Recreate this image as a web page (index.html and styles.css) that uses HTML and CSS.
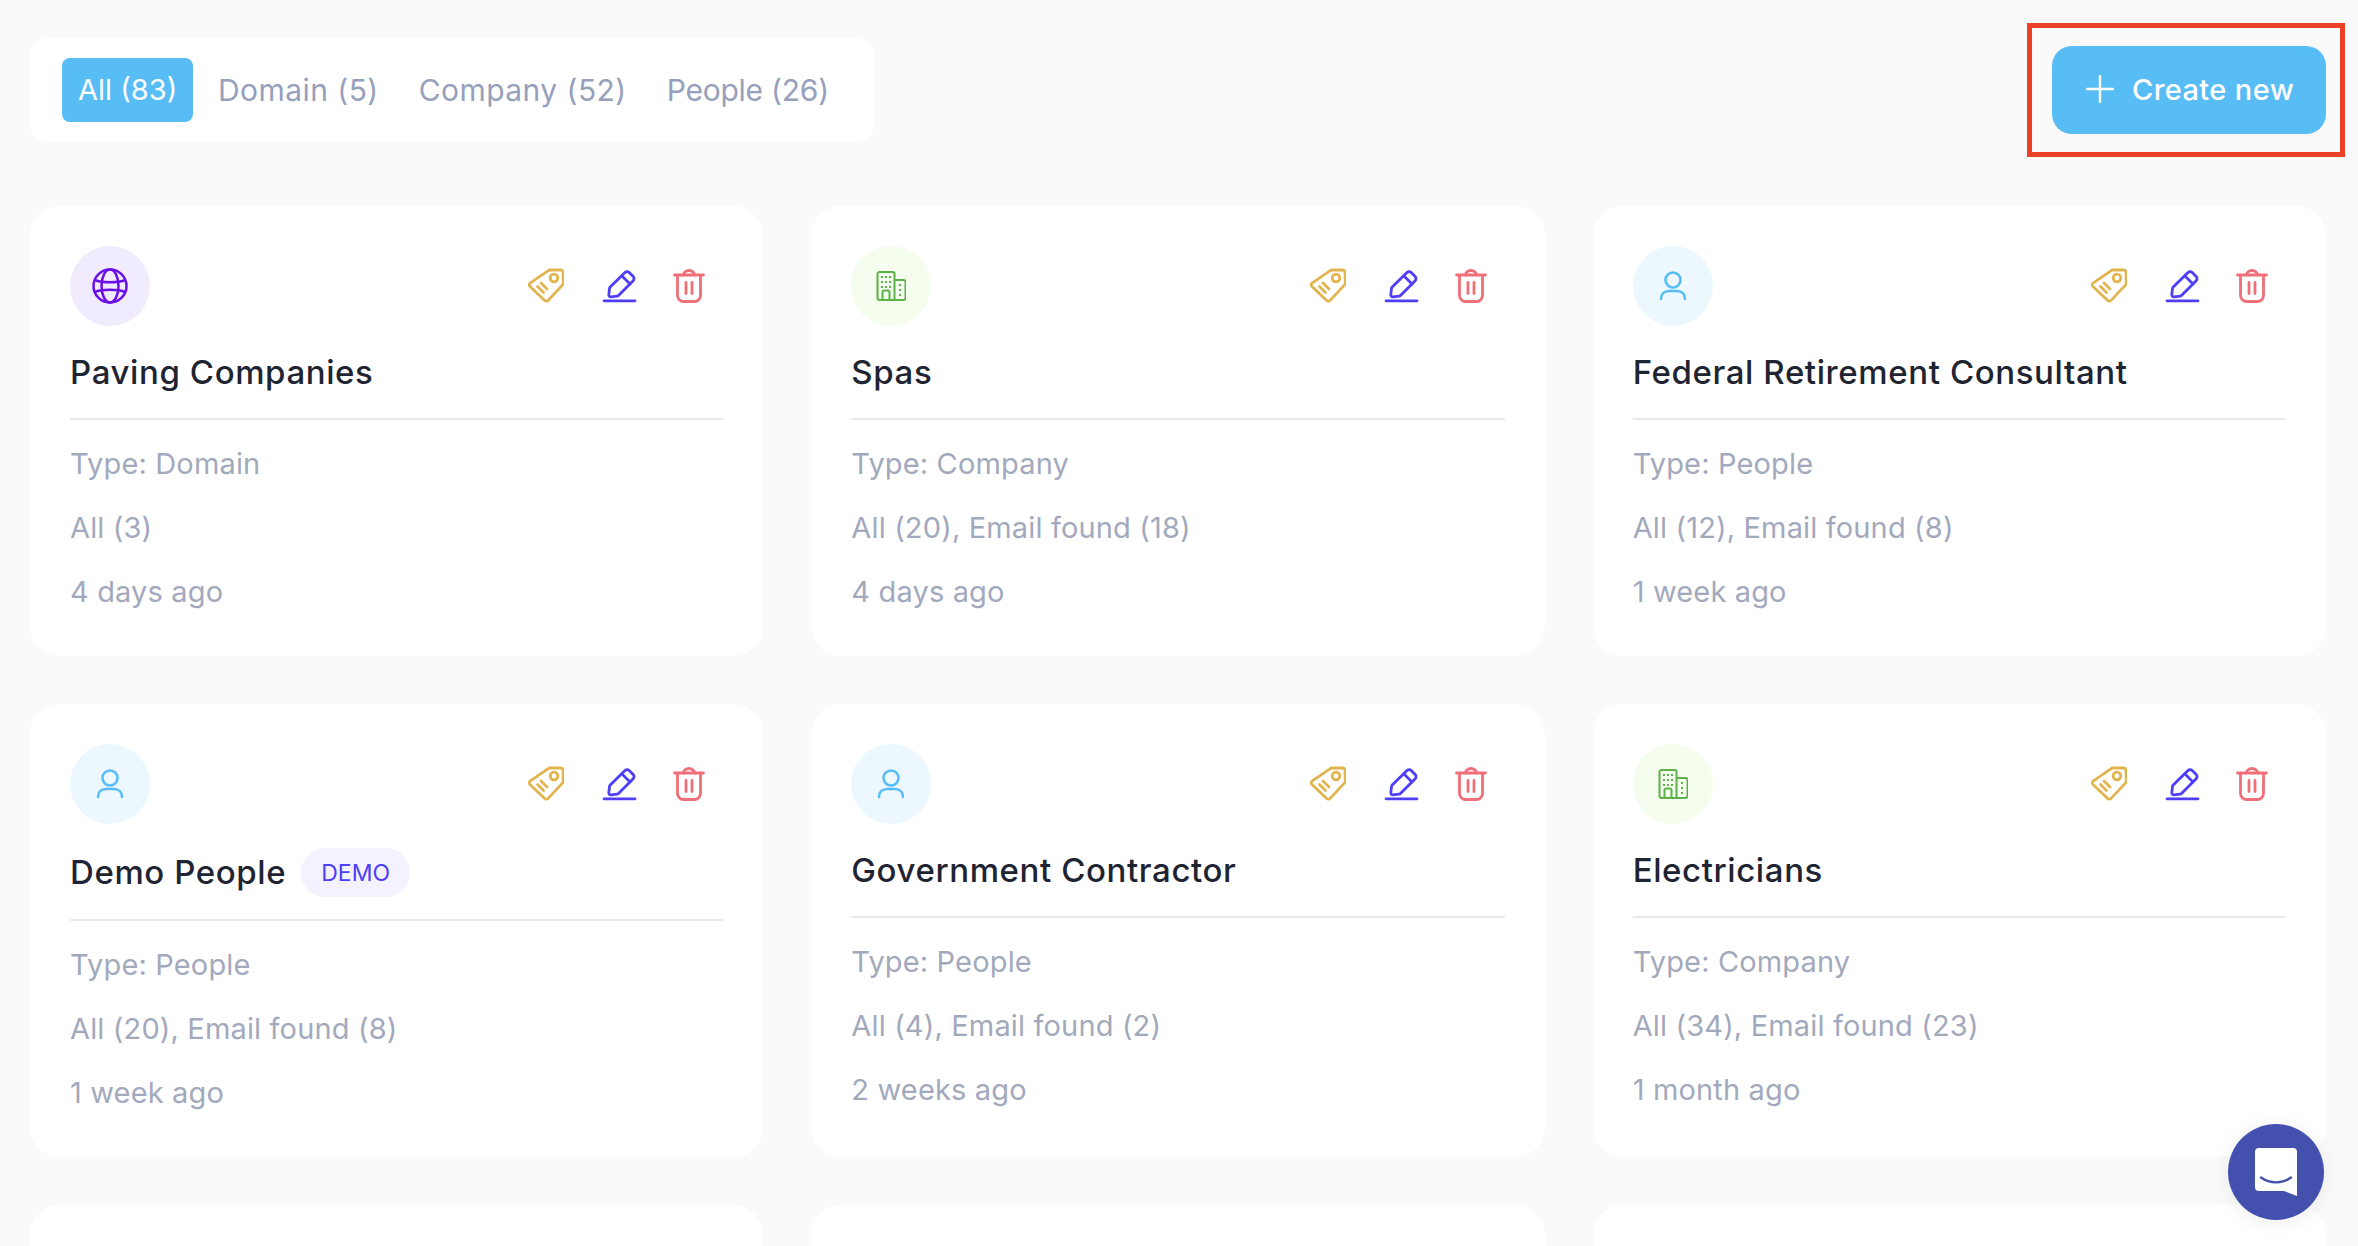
FILE: index.html
```html
<!DOCTYPE html>
<html lang="en">
<head>
<meta charset="utf-8">
<title>Lists</title>
<link rel="stylesheet" href="styles.css">
</head>
<body>
<svg class="defs" width="0" height="0" aria-hidden="true">
  <symbol id="i-tag" viewBox="0 0 36 36"><g fill="none" stroke="currentColor" stroke-width="2.8" stroke-linecap="round" stroke-linejoin="round"><path d="M22 2h10.5a2.500 2.500 0 0 1 2.500 2.500l.3 10.500a3 3 0 0 1-.9 2.100L20.100 32.400a2.400 2.400 0 0 1-3.400 0L2 18.600a2.400 2.400 0 0 1 0-3.400L19.900 2.900A3 3 0 0 1 22 2z"/><circle cx="26" cy="10" r="3.800"/><path d="M13 15l6 6M9.500 18.500l6 6"/></g></symbol>
  <symbol id="i-pen" viewBox="0 0 36 36"><g fill="none" stroke="currentColor" stroke-width="2.800" stroke-linecap="round" stroke-linejoin="round"><path d="M24 4.500a3 3 0 0 1 4.200 0l4 4a3 3 0 0 1 0 4.200L17.500 27.400a2.500 2.500 0 0 1-1.500.700l-6 .700a2 2 0 0 1-2.200-2.200l.7-6a2.500 2.500 0 0 1 .7-1.500z"/><path d="M21 8l8 8"/><path d="M3 32.800h31"/></g></symbol>
  <symbol id="i-trash" viewBox="0 0 36 36"><g fill="none" stroke="currentColor" stroke-width="2.800" stroke-linecap="round" stroke-linejoin="round"><path d="M3.500 7h29"/><path d="M12.500 7a5.500 4.500 0 0 1 11 0"/><path d="M6.500 7.500v20a6 6 0 0 0 6 6h11a6 6 0 0 0 6-6v-20"/><path d="M15 14.500v11M21 14.500v11"/></g></symbol>
  <symbol id="i-globe" viewBox="0 0 36 36"><g fill="none" stroke="currentColor" stroke-width="2.500"><circle cx="18" cy="18" r="16.500"/><ellipse cx="18" cy="18" rx="8.500" ry="16.500"/><path d="M2.500 12c8 3 23 3 31 0M2.500 24c8-3 23-3 31 0"/></g></symbol>
  <symbol id="i-building" viewBox="0 0 30 30"><g fill="none" stroke="currentColor" stroke-width="2" stroke-linejoin="round"><path d="M1.500 3a2 2 0 0 1 2-2h13a2 2 0 0 1 2 2v26h-15a2 2 0 0 1-2-2z"/><path d="M18.500 9h9a2 2 0 0 1 2 2v16a2 2 0 0 1-2 2h-9"/><path d="M6.500 29v-8a1.500 1.500 0 0 1 1.500-1.500h4a1.500 1.500 0 0 1 1.500 1.500v8"/></g><g fill="currentColor"><rect x="5" y="5" width="2" height="2"/><rect x="9" y="5" width="2" height="2"/><rect x="13" y="5" width="2" height="2"/><rect x="5" y="10" width="2" height="2"/><rect x="9" y="10" width="2" height="2"/><rect x="13" y="10" width="2" height="2"/><rect x="5" y="15" width="2" height="2"/><rect x="9" y="15" width="2" height="2"/><rect x="13" y="15" width="2" height="2"/><rect x="23" y="13" width="2" height="2"/><rect x="23" y="18" width="2" height="2"/><rect x="23" y="23" width="2" height="2"/></g></symbol>
  <symbol id="i-user" viewBox="0 0 28 30"><g fill="none" stroke="currentColor" stroke-width="2.600" stroke-linecap="round"><circle cx="14" cy="9" r="7.500"/><path d="M2 28c0-5 3-8 8-8h8c5 0 8 3 8 8"/></g></symbol>
</svg>

<header class="top">
  <nav class="tabs">
    <span class="tab tab-active">All (83)</span>
    <span class="tab">Domain (5)</span>
    <span class="tab">Company (52)</span>
    <span class="tab tab-people">People (26)</span>
  </nav>
  <div class="create-wrap">
    <button class="create" type="button">
      <svg class="plus" viewBox="0 0 28 28"><path d="M14 1v26M1 14h26" fill="none" stroke="currentColor" stroke-width="2.400" stroke-linecap="round"/></svg>
      <span>Create new</span>
    </button>
    <span class="highlight"></span>
  </div>
</header>

<main class="grid">
  <article class="card">
    <div class="card-head">
      <span class="badge-icon bi-domain"><svg class="ti-globe"><use href="#i-globe"/></svg></span>
      <div class="actions"><svg class="a-tag"><use href="#i-tag"/></svg><svg class="a-pen"><use href="#i-pen"/></svg><svg class="a-trash"><use href="#i-trash"/></svg></div>
    </div>
    <h2 class="title">Paving Companies</h2>
    <div class="meta"><p>Type: Domain</p><p>All (3)</p><p>4 days ago</p></div>
  </article>
  <article class="card">
    <div class="card-head">
      <span class="badge-icon bi-company"><svg class="ti-building"><use href="#i-building"/></svg></span>
      <div class="actions"><svg class="a-tag"><use href="#i-tag"/></svg><svg class="a-pen"><use href="#i-pen"/></svg><svg class="a-trash"><use href="#i-trash"/></svg></div>
    </div>
    <h2 class="title">Spas</h2>
    <div class="meta"><p>Type: Company</p><p>All (20), Email found (18)</p><p>4 days ago</p></div>
  </article>
  <article class="card">
    <div class="card-head">
      <span class="badge-icon bi-people"><svg class="ti-user"><use href="#i-user"/></svg></span>
      <div class="actions"><svg class="a-tag"><use href="#i-tag"/></svg><svg class="a-pen"><use href="#i-pen"/></svg><svg class="a-trash"><use href="#i-trash"/></svg></div>
    </div>
    <h2 class="title">Federal Retirement Consultant</h2>
    <div class="meta"><p>Type: People</p><p>All (12), Email found (8)</p><p>1 week ago</p></div>
  </article>
  <article class="card">
    <div class="card-head">
      <span class="badge-icon bi-people"><svg class="ti-user"><use href="#i-user"/></svg></span>
      <div class="actions"><svg class="a-tag"><use href="#i-tag"/></svg><svg class="a-pen"><use href="#i-pen"/></svg><svg class="a-trash"><use href="#i-trash"/></svg></div>
    </div>
    <h2 class="title">Demo People <span class="demo">DEMO</span></h2>
    <div class="meta"><p>Type: People</p><p>All (20), Email found (8)</p><p>1 week ago</p></div>
  </article>
  <article class="card">
    <div class="card-head">
      <span class="badge-icon bi-people"><svg class="ti-user"><use href="#i-user"/></svg></span>
      <div class="actions"><svg class="a-tag"><use href="#i-tag"/></svg><svg class="a-pen"><use href="#i-pen"/></svg><svg class="a-trash"><use href="#i-trash"/></svg></div>
    </div>
    <h2 class="title">Government Contractor</h2>
    <div class="meta"><p>Type: People</p><p>All (4), Email found (2)</p><p>2 weeks ago</p></div>
  </article>
  <article class="card">
    <div class="card-head">
      <span class="badge-icon bi-company"><svg class="ti-building"><use href="#i-building"/></svg></span>
      <div class="actions"><svg class="a-tag"><use href="#i-tag"/></svg><svg class="a-pen"><use href="#i-pen"/></svg><svg class="a-trash"><use href="#i-trash"/></svg></div>
    </div>
    <h2 class="title">Electricians</h2>
    <div class="meta"><p>Type: Company</p><p>All (34), Email found (23)</p><p>1 month ago</p></div>
  </article>
  <article class="card"></article>
  <article class="card"></article>
  <article class="card"></article>
</main>

<button class="chat" type="button" aria-label="Chat">
  <svg viewBox="0 0 42 48"><path d="M0 4a4 4 0 0 1 4-4h34a4 4 0 0 1 4 4v44l-13-5H4a4 4 0 0 1-4-4z" fill="#fff"/><path d="M6 29.500c9 6.500 21 6.500 30 0" fill="none" stroke="#4350ae" stroke-width="2.400" stroke-linecap="round"/></svg>
</button>
</body>
</html>
```

FILE: styles.css
```css
* { box-sizing: border-box; }
html, body { height: 100%; overflow: hidden; }
body {
  margin: 0;
  padding: 38px 32px 0 30px;
  background: #fafafa;
  font-family: "Inter", "Liberation Sans", sans-serif;
}
.defs { position: absolute; }

.top {
  display: flex;
  justify-content: space-between;
  align-items: center;
  margin-bottom: 64px;
}
.tabs {
  display: flex;
  align-items: center;
  width: 844px;
  height: 104px;
  padding: 0 32px;
  gap: 40px;
  background: #fff;
  border-radius: 18px;
}
.tab {
  font-size: 30px;
  letter-spacing: .44px;
  line-height: 64px;
  color: #969fbc;
  white-space: nowrap;
}
.tab-active {
  width: 131px;
  padding: 0 16px;
  margin-right: -15px;
  background: #58bdf5;
  color: #fff;
  border-radius: 8px;
  font-size: 29px;
  letter-spacing: 0;
}
.tab-people { letter-spacing: -.24px; }

.create-wrap { position: relative; }
.create {
  display: flex;
  align-items: center;
  gap: 18px;
  width: 274px;
  height: 88px;
  padding: 0 30px 2px 34px;
  border: 0;
  border-radius: 20px;
  background: #58bdf5;
  color: #fff;
  font: 500 29px "Inter", "Liberation Sans", sans-serif;
  letter-spacing: .4px;
  white-space: nowrap;
}
.plus { width: 28px; height: 28px; flex: none; }
.highlight {
  position: absolute;
  inset: -23px -19px -23px -25px;
  border: 5px solid #ea4126;
  pointer-events: none;
}

.grid {
  display: grid;
  grid-template-columns: repeat(3, 1fr);
  gap: 48px;
}
.card {
  min-height: 450px;
  padding: 40px 40px 32px;
  background: #fff;
  border-radius: 30px;
}
.card-head {
  display: flex;
  justify-content: space-between;
  align-items: center;
  height: 80px;
}
.badge-icon {
  display: flex;
  align-items: center;
  justify-content: center;
  width: 80px;
  height: 80px;
  border-radius: 50%;
}
.bi-domain { background: #f0ebfd; color: #6a0fe8; }
.bi-company { background: #f5fdee; color: #5cb248; }
.bi-people { background: #ecf8fe; color: #58bdf5; }
.ti-globe { width: 36px; height: 36px; }
.ti-building { width: 30px; height: 30px; }
.ti-user { width: 28px; height: 30px; }

.actions {
  display: flex;
  align-items: center;
  gap: 34px;
  padding-right: 16px;
}
.actions svg { width: 36px; height: 36px; flex: none; }
.a-tag { color: #e2b44d; }
.a-pen { color: #4e3ff7; margin-left: 3px; }
.a-trash { color: #ef6f78; }

.title {
  display: flex;
  align-items: center;
  gap: 15px;
  min-height: 48px;
  margin: 22px 0 0;
  font-size: 33px;
  font-weight: 500;
  letter-spacing: .6px;
  line-height: 48px;
  color: #1f2432;
  white-space: nowrap;
}
.demo {
  display: inline-flex;
  align-items: center;
  height: 49px;
  margin-top: 2px;
  padding: 0 20px;
  border-radius: 25px;
  background: #f4f2fe;
  color: #4e3ff7;
  font-size: 23px;
  font-weight: 400;
  letter-spacing: 0;
}
.meta {
  margin-top: 22px;
  padding-top: 12px;
  border-top: 2px solid #e8e9ec;
  font-size: 29px;
  letter-spacing: .15px;
  line-height: 64px;
  color: #a3a9bd;
}
.meta p { margin: 0; }

.chat {
  position: fixed;
  left: 2228px;
  top: 1124px;
  display: flex;
  align-items: center;
  justify-content: center;
  width: 96px;
  height: 96px;
  padding: 0;
  border: 0;
  border-radius: 50%;
  background: #4350ae;
  box-shadow: 0 2px 20px rgba(0,0,0,.08);
}
.chat svg { width: 42px; height: 48px; }
```
